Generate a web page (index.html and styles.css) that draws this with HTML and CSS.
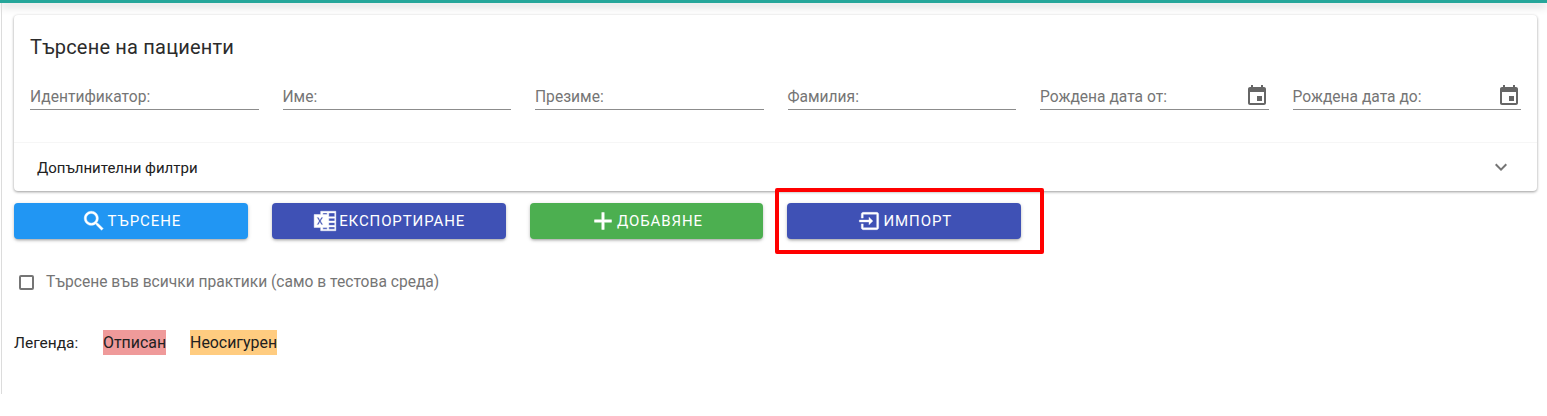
FILE: index.html
```html
<!DOCTYPE html>
<html lang="bg">
<head>
    <meta charset="UTF-8">
    <meta name="viewport" content="width=device-width, initial-scale=1.0">
    <title>Търсене на пациенти</title>
    <link rel="stylesheet" href="styles.css">
</head>
<body>
    <div class="top-bar"></div>
    <div class="side-mark"></div>
    <main class="page">
        <section class="panel">
            <div class="search-card">
                <h1>Търсене на пациенти</h1>
                <div class="fields">
                    <div class="field"><span>Идентификатор:</span></div>
                    <div class="field"><span>Име:</span></div>
                    <div class="field"><span>Презиме:</span></div>
                    <div class="field"><span>Фамилия:</span></div>
                    <div class="field">
                        <span>Рождена дата от:</span>
                        <svg class="calendar" viewBox="0 0 24 24"><path d="M17 12h-5v5h5v-5zM16 1v2H8V1H6v2H5c-1.11 0-1.99.9-1.99 2L3 19c0 1.1.89 2 2 2h14c1.1 0 2-.9 2-2V5c0-1.1-.9-2-2-2h-1V1h-2zm3 18H5V8h14v11z"/></svg>
                    </div>
                    <div class="field">
                        <span>Рождена дата до:</span>
                        <svg class="calendar" viewBox="0 0 24 24"><path d="M17 12h-5v5h5v-5zM16 1v2H8V1H6v2H5c-1.11 0-1.99.9-1.99 2L3 19c0 1.1.89 2 2 2h14c1.1 0 2-.9 2-2V5c0-1.1-.9-2-2-2h-1V1h-2zm3 18H5V8h14v11z"/></svg>
                    </div>
                </div>
            </div>
            <div class="more-filters">
                <span>Допълнителни филтри</span>
                <svg class="chevron" viewBox="0 0 24 24"><path d="M16.59 8.59L12 13.17 7.41 8.59 6 10l6 6 6-6z"/></svg>
            </div>
        </section>

        <div class="actions">
            <button class="btn btn-blue">
                <svg viewBox="0 0 24 24"><path d="M15.5 14h-.79l-.28-.27C15.41 12.59 16 11.11 16 9.5 16 5.91 13.09 3 9.5 3S3 5.91 3 9.5 5.91 16 9.5 16c1.61 0 3.09-.59 4.23-1.57l.27.28v.79l5 4.99L20.49 19l-4.99-5zm-6 0C7.01 14 5 11.99 5 9.5S7.01 5 9.5 5 14 7.01 14 9.5 11.99 14 9.5 14z"/></svg>
                Търсене
            </button>
            <button class="btn btn-indigo">
                <svg viewBox="0 0 24 24"><path fill-rule="evenodd" d="M8 3h14v18H8v-3H2V6h6V3zm2 1.500V6h4V4.500h-4zm5.500 0V8H21V4.500h-5.500zM15.500 9.500V12H21V9.500h-5.500zm0 4V16H21v-2.500h-5.500zm0 4v2H21v-2h-5.500zM10 18v1.500h4V18h-4zM4.300 8.500 6.500 12l-2.200 3.500h1.700L7.300 13.200l1.300 2.300h1.700L8.100 12l2.200-3.500H8.600L7.300 10.800 6 8.500H4.300z"/></svg>
                Експортиране
            </button>
            <button class="btn btn-green">
                <svg viewBox="1.300 1.300 21.400 21.400"><path d="M19 13h-6v6h-2v-6H5v-2h6V5h2v6h6v2z"/></svg>
                Добавяне
            </button>
            <button class="btn btn-indigo">
                <svg viewBox="-1.500 -1.500 27 27"><path d="M6 3h14c1.100 0 2 .9 2 2v14c0 1.100-.9 2-2 2H6c-1.100 0-2-.9-2-2v-4h2v4h14V5H6v4H4V5c0-1.100.9-2 2-2zM12 16l4-4-4-4v3H2v2h10v3z"/></svg>
                Импорт
            </button>
        </div>

        <label class="all-practices">
            <span class="box"></span>
            Търсене във всички практики (само в тестова среда)
        </label>

        <div class="legend">
            <span class="legend-title">Легенда:</span>
            <span class="tag tag-red">Отписан</span>
            <span class="tag tag-orange">Неосигурен</span>
        </div>
    </main>
    <div class="highlight"></div>
</body>
</html>
```

FILE: styles.css
```css
/* Global styles */
body {
    margin: 0;
    height: 416px;
    overflow: hidden;
    font-family: 'Roboto', sans-serif;
    background-color: #fff;
    color: #212121;
}

.top-bar {
    height: 3px;
    background-color: #26a69a;
    box-shadow: 0 3px 8px rgba(0, 0, 0, 0.25);
}

.side-mark {
    position: absolute;
    left: 1px;
    top: 3px;
    width: 1px;
    height: 391px;
    background-color: #dcdcdc;
}

.page {
    padding: 12px 10px 0 14px;
}

/* Search panel */
.panel {
    border-radius: 4px;
    background-color: #fff;
    box-shadow: 0 1px 3px rgba(0, 0, 0, 0.4);
}

.search-card {
    height: 128px;
    box-sizing: border-box;
    padding: 22px 16px 0;
    border-bottom: 1px solid #f6f6f6;
}

.search-card h1 {
    margin: 0;
    font-size: 20px;
    font-weight: 400;
    line-height: 20px;
    letter-spacing: 0.2px;
    color: #2b2b2b;
}

.fields {
    display: grid;
    grid-template-columns: repeat(6, 1fr);
    column-gap: 24px;
    margin-top: 21px;
}

.field {
    display: flex;
    align-items: flex-end;
    justify-content: space-between;
    height: 28px;
    padding-bottom: 3px;
    border-bottom: 1px solid #8c8c8c;
    font-size: 15.6px;
    line-height: 18px;
    color: #757575;
}

.calendar {
    width: 24px;
    height: 24px;
    margin-bottom: -2px;
    fill: #666;
}

.more-filters {
    display: flex;
    align-items: center;
    justify-content: space-between;
    height: 48px;
    padding: 0 24px 0 23px;
    font-size: 15px;
}

.more-filters span {
    padding-top: 2px;
}

.chevron {
    width: 24px;
    height: 24px;
    fill: #757575;
}

/* Buttons */
.actions {
    display: grid;
    grid-template-columns: repeat(6, 233.8px);
    column-gap: 24px;
    margin-top: 12px;
}

.btn {
    display: flex;
    align-items: center;
    justify-content: center;
    gap: 1px;
    height: 36px;
    padding: 0;
    border: none;
    border-radius: 4px;
    color: #fff;
    font-family: inherit;
    font-size: 15px;
    font-weight: 400;
    letter-spacing: 0.9px;
    text-transform: uppercase;
    box-shadow: 0 2px 3px -1px rgba(0, 0, 0, 0.3), 0 1px 4px rgba(0, 0, 0, 0.15);
}

.btn svg {
    width: 26px;
    height: 26px;
    fill: #fff;
    stroke: #fff;
    stroke-width: 0.4;
}

.btn-blue {
    background-color: #2196f3;
}

.btn-indigo {
    background-color: #3f51b5;
}

.btn-green {
    background-color: #4caf50;
}

/* Checkbox row */
.all-practices {
    display: flex;
    align-items: center;
    margin: 32px 0 0 5px;
    height: 22px;
    font-size: 15.6px;
    color: #757575;
}

.box {
    width: 11px;
    height: 11px;
    margin-right: 12px;
    border: 2px solid #757575;
    border-radius: 2px;
}

/* Legend */
.legend {
    display: flex;
    align-items: center;
    margin-top: 37px;
    font-size: 15.9px;
}

.legend-title {
    width: 89px;
    font-size: 15.5px;
}

.tag {
    height: 25px;
    line-height: 25px;
    margin-right: 24px;
}

.tag-red {
    background-color: #ef9a9a;
}

.tag-orange {
    background-color: #ffcc80;
}

/* Red annotation around the import button */
.highlight {
    position: absolute;
    left: 775px;
    top: 188px;
    width: 261px;
    height: 58px;
    border: 4px solid #ff0000;
    border-radius: 2px;
}
```
